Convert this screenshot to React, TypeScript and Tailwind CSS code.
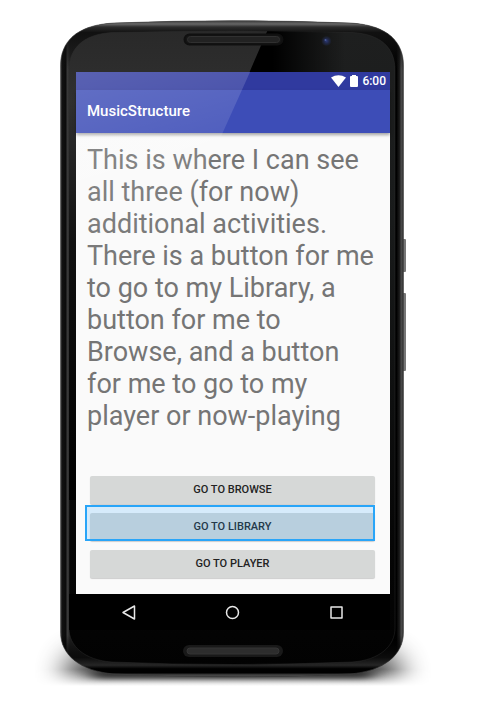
const BODY =
  "M60.500 66 C60.500 42 76 25 114 23 Q232 18.500 350 23 C388 25 403.500 42 403.500 66 V632 C403.500 655 384 671 350 674 Q232 680 114 674 C80 671 60.500 655 60.500 632 Z";
const FACE =
  "M69 70 C69 48 84 34 112 32.500 Q232 29.500 352 32.500 C381 34 395 48 395 70 V628 C395 646 380 660 352 662 Q232 667 112 662 C84 660 69 646 69 628 Z";

function DeviceFrame() {
  return (
    <svg
      aria-hidden="true"
      viewBox="0 0 502 722"
      className="pointer-events-none absolute -top-[20px] -left-[60px] h-[722px] w-[502px] max-w-none"
    >
      <defs>
        <linearGradient id="rim" x1="60" x2="404" y1="0" y2="0" gradientUnits="userSpaceOnUse">
          <stop offset="0" stopColor="#666" />
          <stop offset="0.006" stopColor="#111" />
          <stop offset="0.016" stopColor="#0c0c0c" />
          <stop offset="0.022" stopColor="#3a3a3a" />
          <stop offset="0.03" stopColor="#222" />
          <stop offset="0.5" stopColor="#111" />
          <stop offset="0.978" stopColor="#000" />
          <stop offset="0.987" stopColor="#1c1c1c" />
          <stop offset="0.992" stopColor="#4a4a4a" />
          <stop offset="1" stopColor="#2a2a2a" />
        </linearGradient>
        <linearGradient id="face" x1="0" x2="0" y1="31" y2="668" gradientUnits="userSpaceOnUse">
          <stop offset="0" stopColor="#1e1f1f" />
          <stop offset="0.3" stopColor="#191b1b" />
          <stop offset="0.8" stopColor="#060606" />
          <stop offset="1" stopColor="#020202" />
        </linearGradient>
        <linearGradient id="dark" x1="225" x2="345" y1="0" y2="0" gradientUnits="userSpaceOnUse">
          <stop offset="0" stopColor="#000" />
          <stop offset="0.4" stopColor="#000" />
          <stop offset="1" stopColor="#000" stopOpacity="0" />
        </linearGradient>
        <linearGradient id="leftFace" x1="0" x2="0" y1="31" y2="500" gradientUnits="userSpaceOnUse">
          <stop offset="0" stopColor="#292929" />
          <stop offset="0.15" stopColor="#303030" />
          <stop offset="0.45" stopColor="#111" />
          <stop offset="1" stopColor="#000" />
        </linearGradient>
        <linearGradient id="topEdge" x1="0" x2="0" y1="20" y2="70" gradientUnits="userSpaceOnUse">
          <stop offset="0" stopColor="#333" />
          <stop offset="0.08" stopColor="#666" />
          <stop offset="0.14" stopColor="#2c2c2c" />
          <stop offset="0.25" stopColor="#111" />
          <stop offset="1" stopColor="#111" stopOpacity="0" />
        </linearGradient>
        <linearGradient id="bottomEdge" x1="0" x2="0" y1="635" y2="680" gradientUnits="userSpaceOnUse">
          <stop offset="0" stopColor="#000" stopOpacity="0" />
          <stop offset="0.5" stopColor="#0c0c0c" />
          <stop offset="0.67" stopColor="#262626" />
          <stop offset="0.75" stopColor="#000" />
          <stop offset="0.84" stopColor="#000" />
          <stop offset="0.89" stopColor="#484848" />
          <stop offset="1" stopColor="#1c1c1c" />
        </linearGradient>
        <radialGradient id="lens">
          <stop offset="0" stopColor="#2c3a78" />
          <stop offset="0.5" stopColor="#202745" />
          <stop offset="1" stopColor="#181a1c" />
        </radialGradient>
        <linearGradient id="floorFade" x1="0" x2="0" y1="610" y2="686" gradientUnits="userSpaceOnUse">
          <stop offset="0" stopColor="#fff" />
          <stop offset="0.78" stopColor="#fff" />
          <stop offset="1" stopColor="#000" />
        </linearGradient>
        <mask id="floor" maskUnits="userSpaceOnUse" x="0" y="600" width="502" height="90">
          <rect x="0" y="600" width="502" height="90" fill="url(#floorFade)" />
        </mask>
        <filter id="soft" x="-30%" y="-80%" width="160%" height="260%">
          <feGaussianBlur stdDeviation="15 13" />
        </filter>
        <filter id="contact" x="-20%" y="-100%" width="140%" height="300%">
          <feGaussianBlur stdDeviation="8 2" />
        </filter>
        <clipPath id="faceClip">
          <path d={FACE} />
        </clipPath>
      </defs>
      <g mask="url(#floor)">
        <rect x="66" y="652" width="334" height="44" rx="20" fill="#000" opacity="0.75" filter="url(#soft)" />
      </g>
      <rect x="92" y="670" width="280" height="9" rx="4" fill="#000" opacity="0.6" filter="url(#contact)" />
      <rect x="402" y="239" width="4" height="33" rx="1" fill="#777" />
      <rect x="402" y="293" width="4" height="78" rx="1" fill="#777" />
      <path d={BODY} fill="url(#rim)" />
      <path d={BODY} fill="url(#topEdge)" />
      <path d={BODY} fill="url(#bottomEdge)" />
      <path d={BODY} fill="none" stroke="#444" strokeOpacity="0.6" />
      <path d={FACE} fill="url(#face)" stroke="#333" strokeOpacity="0.4" />
      <g clipPath="url(#faceClip)">
        <rect x="225" y="31" width="120" height="50" fill="url(#dark)" />
        <path d="M60 20 H272 L247 78 H76 V500 H60 Z" fill="url(#leftFace)" />
        <rect x="69" y="594" width="321" height="36" fill="#000" />
      </g>
      <rect x="184.500" y="34.500" width="98" height="10" rx="5" fill="#151515" stroke="#101010" strokeWidth="2" />
      <rect x="187.500" y="36.500" width="92" height="6" rx="3" fill="#222" stroke="#303030" />
      <rect x="183" y="645" width="100" height="12" rx="6" fill="#191919" />
      <rect x="187" y="648" width="92" height="6" rx="3" fill="#2d2d2d" stroke="#353535" />
      <circle cx="326.500" cy="41" r="5" fill="url(#lens)" />
      <circle cx="325.500" cy="40" r="1" fill="#4a5c98" />
    </svg>
  );
}

function ScreenGlare() {
  return (
    <svg
      aria-hidden="true"
      viewBox="0 0 314 522"
      className="pointer-events-none absolute inset-0 h-full w-full"
      preserveAspectRatio="none"
    >
      <defs>
        <linearGradient id="glare" x1="0" x2="60" y1="0" y2="200" gradientUnits="userSpaceOnUse">
          <stop offset="0" stopColor="#fff" stopOpacity="0.2" />
          <stop offset="1" stopColor="#fff" stopOpacity="0" />
        </linearGradient>
      </defs>
      <path d="M0 0 H174 L84 200 H0 Z" fill="url(#glare)" />
    </svg>
  );
}

function StatusBar() {
  return (
    <div className="flex h-[18px] items-center justify-end gap-1 bg-[#303a9f] pr-1 text-xs text-white">
      <svg aria-hidden="true" viewBox="0 0 15 12" className="h-3 w-[15px]">
        <path d="M0 2.500 Q7.500 -2 15 2.500 L7.500 12 Z" fill="#fff" />
      </svg>
      <svg aria-hidden="true" viewBox="0 0 8 12" className="h-3 w-2">
        <path d="M2 0 H6 V1 H7 Q8 1 8 2 V11 Q8 12 7 12 H1 Q0 12 0 11 V2 Q0 1 1 1 H2 Z" fill="#fff" />
      </svg>
      <span className="font-medium">6:00</span>
    </div>
  );
}

function ActionButton({ label, selected = false }: { label: string; selected?: boolean }) {
  return (
    <div className="relative">
      <button
        type="button"
        className="block h-7 w-full rounded-[2px] bg-[#d6d8d7] pt-px text-[11px] font-medium text-[#222] shadow-[0_1px_1px_rgba(0,0,0,0.18)]"
      >
        {label}
      </button>
      {selected && (
        <span className="pointer-events-none absolute -top-2 right-0 bottom-0 -left-[5px] border-2 border-[#29a5f8] bg-[#33a5ff]/18" />
      )}
    </div>
  );
}

function NavigationBar() {
  return (
    <nav className="flex h-9 items-center justify-between bg-black px-[45px]">
      <button type="button" aria-label="Back">
        <svg viewBox="0 0 16 16" className="h-4 w-4" fill="none" stroke="#e8e8e8" strokeWidth="1.500" strokeLinejoin="round">
          <path d="M2 8.500 L13.500 2 V15 Z" />
        </svg>
      </button>
      <button type="button" aria-label="Home">
        <svg viewBox="0 0 16 16" className="h-4 w-4" fill="none" stroke="#e8e8e8" strokeWidth="1.500">
          <circle cx="7.500" cy="8.500" r="6" />
        </svg>
      </button>
      <button type="button" aria-label="Recent apps">
        <svg viewBox="0 0 16 16" className="h-4 w-4" fill="none" stroke="#e8e8e8" strokeWidth="1.500" strokeLinejoin="round">
          <rect x="2" y="3" width="11" height="11" />
        </svg>
      </button>
    </nav>
  );
}

export default function App() {
  return (
    <main className="flex min-h-screen justify-center bg-white pt-5 pr-[38px] pb-10 font-['Roboto',sans-serif]">
      <div className="relative w-[344px] pt-[52px] pr-[14px] pb-12 pl-4">
        <DeviceFrame />
        <div className="relative">
          <section className="relative bg-[#fafafa]">
            <StatusBar />
            <header className="relative flex h-[43px] items-center bg-[#3d4db7] px-[11px] shadow-[0_2px_3px_rgba(0,0,0,0.35)]">
              <h1 className="text-[15px] font-medium text-white">MusicStructure</h1>
            </header>
            <div className="px-[11px] pt-[11px] pb-4">
              <p className="text-[27px] leading-8 text-[#757575]">
                This is where I can see all three (for now) additional activities. There is a button
                for me to go to my Library, a button for me to Browse, and a button for me to go to my
                player or now-playing
              </p>
              <div className="mt-11 mr-1 ml-[3px] flex flex-col gap-[9px]">
                <ActionButton label="GO TO BROWSE" />
                <ActionButton label="GO TO LIBRARY" selected />
                <ActionButton label="GO TO PLAYER" />
              </div>
            </div>
            <ScreenGlare />
          </section>
          <NavigationBar />
        </div>
      </div>
    </main>
  );
}
